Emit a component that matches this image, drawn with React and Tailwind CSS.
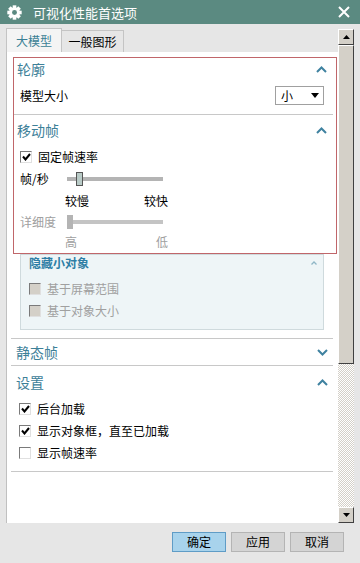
import React from 'react'

const HEAD = 'text-[#3d8098]'

function Chevron({ down, light }) {
  return (
    <svg width="11" height="7" viewBox="0 0 11 7" className="shrink-0">
      <polyline
        points={down ? '1,1 5.5,5.5 10,1' : '1,6 5.5,1.5 10,6'}
        fill="none"
        stroke={light ? '#8fb6c6' : '#3f82a0'}
        strokeWidth="2"
      />
    </svg>
  )
}

function Check({ checked, disabled }) {
  return (
    <span
      className={`w-[12px] h-[12px] shrink-0 flex items-center justify-center border border-t-[#7a7a7a] border-l-[#7a7a7a] border-b-[#e0e0e0] border-r-[#e0e0e0] ${disabled ? 'bg-[#d4d0c8]' : 'bg-white'}`}
    >
      {checked && (
        <svg width="9" height="8" viewBox="0 0 9 8">
          <path d="M1 3.5 L3.5 6.5 L8 1" fill="none" stroke="#000" strokeWidth="2" />
        </svg>
      )}
    </span>
  )
}

function CheckRow({ label, checked, disabled, h = 'h-[22px]' }) {
  return (
    <div className={`${h} flex items-center gap-[6px] pl-[6px] text-[12px] ${disabled ? 'text-[#a0a0a0]' : 'text-black'}`}>
      <Check checked={checked} disabled={disabled} />
      <span>{label}</span>
    </div>
  )
}

function Header({ title, down, h }) {
  return (
    <div className={`${h} flex items-center justify-between pl-[3px] pr-[9px]`}>
      <span className={`text-[14px] ${HEAD}`}>{title}</span>
      <Chevron down={down} />
    </div>
  )
}

function Gear() {
  const teeth = [0, 45, 90, 135]
  return (
    <svg width="15" height="15" viewBox="0 0 14 14">
      {teeth.map(a => (
        <rect key={a} x="5.3" y="0.3" width="3.4" height="13.4" fill="#fff" transform={`rotate(${a} 7 7)`} />
      ))}
      <circle cx="7" cy="7" r="5" fill="#fff" />
      <circle cx="7" cy="7" r="2.3" fill="#5b8a81" />
    </svg>
  )
}

function Btn3d({ up }) {
  return (
    <div className="h-[16px] w-[16px] bg-[#d4d0c8] border border-t-white border-l-white border-b-[#404040] border-r-[#404040] flex items-center justify-center">
      <svg width="7" height="4" viewBox="0 0 7 4">
        <polygon points={up ? '0,4 3.5,0 7,4' : '0,0 3.5,4 7,0'} fill="#000" />
      </svg>
    </div>
  )
}

export default function App() {
  return (
    <div className="w-[360px] h-[563px] bg-[#e6e6e6] flex flex-col font-['Noto_Sans_CJK_SC','Liberation_Sans',sans-serif] overflow-hidden">
      {/* title bar */}
      <div className="h-[24px] shrink-0 bg-[#5b8a81] flex items-center pl-[7px] pr-[10px]">
        <Gear />
        <span className="ml-[11px] text-white text-[13px] leading-none">可视化性能首选项</span>
        <svg width="12" height="12" viewBox="0 0 12 12" className="ml-auto">
          <path d="M1 1 L11 11 M11 1 L1 11" stroke="#fff" strokeWidth="2" />
        </svg>
      </div>

      {/* body */}
      <div className="h-[499px] shrink-0 flex pl-[6px] pt-[4px]">
        <div className="w-[332px] flex flex-col">
          <div className="h-[24px] flex items-end text-[12px]">
            <div className="h-[24px] w-[56px] bg-[#f4f4f4] border border-b-0 border-[#c4c4c4] flex items-center justify-center text-[#3a7f95]">大模型</div>
            <div className="h-[22px] w-[62px] border border-l-0 border-b-0 border-[#c4c4c4] flex items-center justify-center text-black">一般图形</div>
          </div>

          <div className="flex-1 bg-white border-l border-[#c0c0c0] pt-[5px] pl-[6px]">
            {/* red box */}
            <div className="w-[324px] h-[197px] border border-[#c0666a] flex flex-col">
              <Header title="轮廓" h="h-[22px]" />
              <div className="h-[31px] flex items-center justify-between pl-[6px] pr-[12px] text-[12px]">
                <span>模型大小</span>
                <div className="w-[49px] h-[19px] border border-[#a0a0a0] flex items-center justify-between pl-[5px] pr-[4px]">
                  <span>小</span>
                  <svg width="8" height="5" viewBox="0 0 8 5">
                    <polygon points="0,0 4,5 8,0" fill="#000" />
                  </svg>
                </div>
              </div>
              <div className="mt-[3px] mr-[3px] h-px bg-[#c8c8c8]" />
              <Header title="移动帧" h="h-[30px]" />
              <CheckRow label="固定帧速率" checked h="h-[24px]" />
              <div className="h-[20px] flex items-center text-[12px]">
                <span className="pl-[6px] w-[52px]">帧/秒</span>
                <div className="relative w-[96px] h-[4px] ml-[1px] bg-[#b4b4b4]">
                  <div className="absolute left-[9px] top-[-5px] w-[7px] h-[14px] bg-[#b9cbc7] border border-[#555]" />
                </div>
              </div>
              <div className="h-[24px] flex items-center text-[12px] pl-[51px]">
                <div className="w-[103px] flex justify-between">
                  <span>较慢</span>
                  <span>较快</span>
                </div>
              </div>
              <div className="h-[18px] flex items-center text-[12px] text-[#a0a0a0]">
                <span className="pl-[6px] w-[52px]">详细度</span>
                <div className="relative w-[96px] h-[4px] ml-[1px] bg-[#c4c4c4]">
                  <div className="absolute left-0 top-[-5px] w-[6px] h-[14px] bg-[#b4b4b4]" />
                </div>
              </div>
              <div className="h-[22px] flex items-center text-[12px] text-[#a0a0a0] pl-[51px]">
                <div className="w-[103px] flex justify-between">
                  <span>高</span>
                  <span>低</span>
                </div>
              </div>
            </div>

            {/* hidden small objects */}
            <div className="ml-[7px] w-[304px] h-[76px] bg-[#eef5f7] border border-[#cfdadd] flex flex-col">
              <div className="h-[16px] flex items-center justify-between pl-[8px] pr-[6px]">
                <span className="text-[12px] font-bold text-[#2d7ea5]">隐藏小对象</span>
                <svg width="6" height="4" viewBox="0 0 6 4">
                  <polyline points="0.5,3.5 3,1 5.5,3.5" fill="none" stroke="#8fb6c6" strokeWidth="1.3" />
                </svg>
              </div>
              <div className="mt-[7px] pl-[2px]">
                <CheckRow label="基于屏幕范围" disabled />
                <CheckRow label="基于对象大小" disabled />
              </div>
            </div>

            <div className="mt-[8px] ml-[-2px] w-[322px] h-px bg-[#c8c8c8]" />
            <div className="w-[324px]">
              <Header title="静态帧" down h="h-[26px]" />
            </div>
            <div className="ml-[-2px] w-[322px] h-px bg-[#c8c8c8]" />
            <div className="w-[324px]">
              <Header title="设置" h="h-[32px]" />
            </div>
            <CheckRow label="后台加载" checked />
            <CheckRow label="显示对象框，直至已加载" checked />
            <CheckRow label="显示帧速率" />
            <div className="mt-[7px] ml-[-2px] w-[322px] h-px bg-[#c8c8c8]" />
          </div>
        </div>

        {/* scrollbar */}
        <div className="w-[16px] mt-[1px] flex flex-col">
          <Btn3d up />
          <div className="h-[319px] bg-[#d4d0c8] border border-t-white border-l-white border-b-[#404040] border-r-[#404040]" />
          <div className="flex-1 bg-[repeating-conic-gradient(#d4d0c8_0_25%,#ffffff_0_50%)] bg-[length:2px_2px]" />
          <Btn3d />
        </div>
      </div>

      {/* buttons */}
      <div className="flex justify-end gap-[5px] pt-[9px] pr-[16px] text-[12px]">
        <button className="w-[54px] h-[20px] bg-[#a8d3ec] border border-[#5f9cc6] flex items-center justify-center">确定</button>
        <button className="w-[54px] h-[20px] bg-[#d4d4d4] border border-[#b4b4b4] flex items-center justify-center">应用</button>
        <button className="w-[54px] h-[20px] bg-[#d4d4d4] border border-[#b4b4b4] flex items-center justify-center">取消</button>
      </div>
    </div>
  )
}
